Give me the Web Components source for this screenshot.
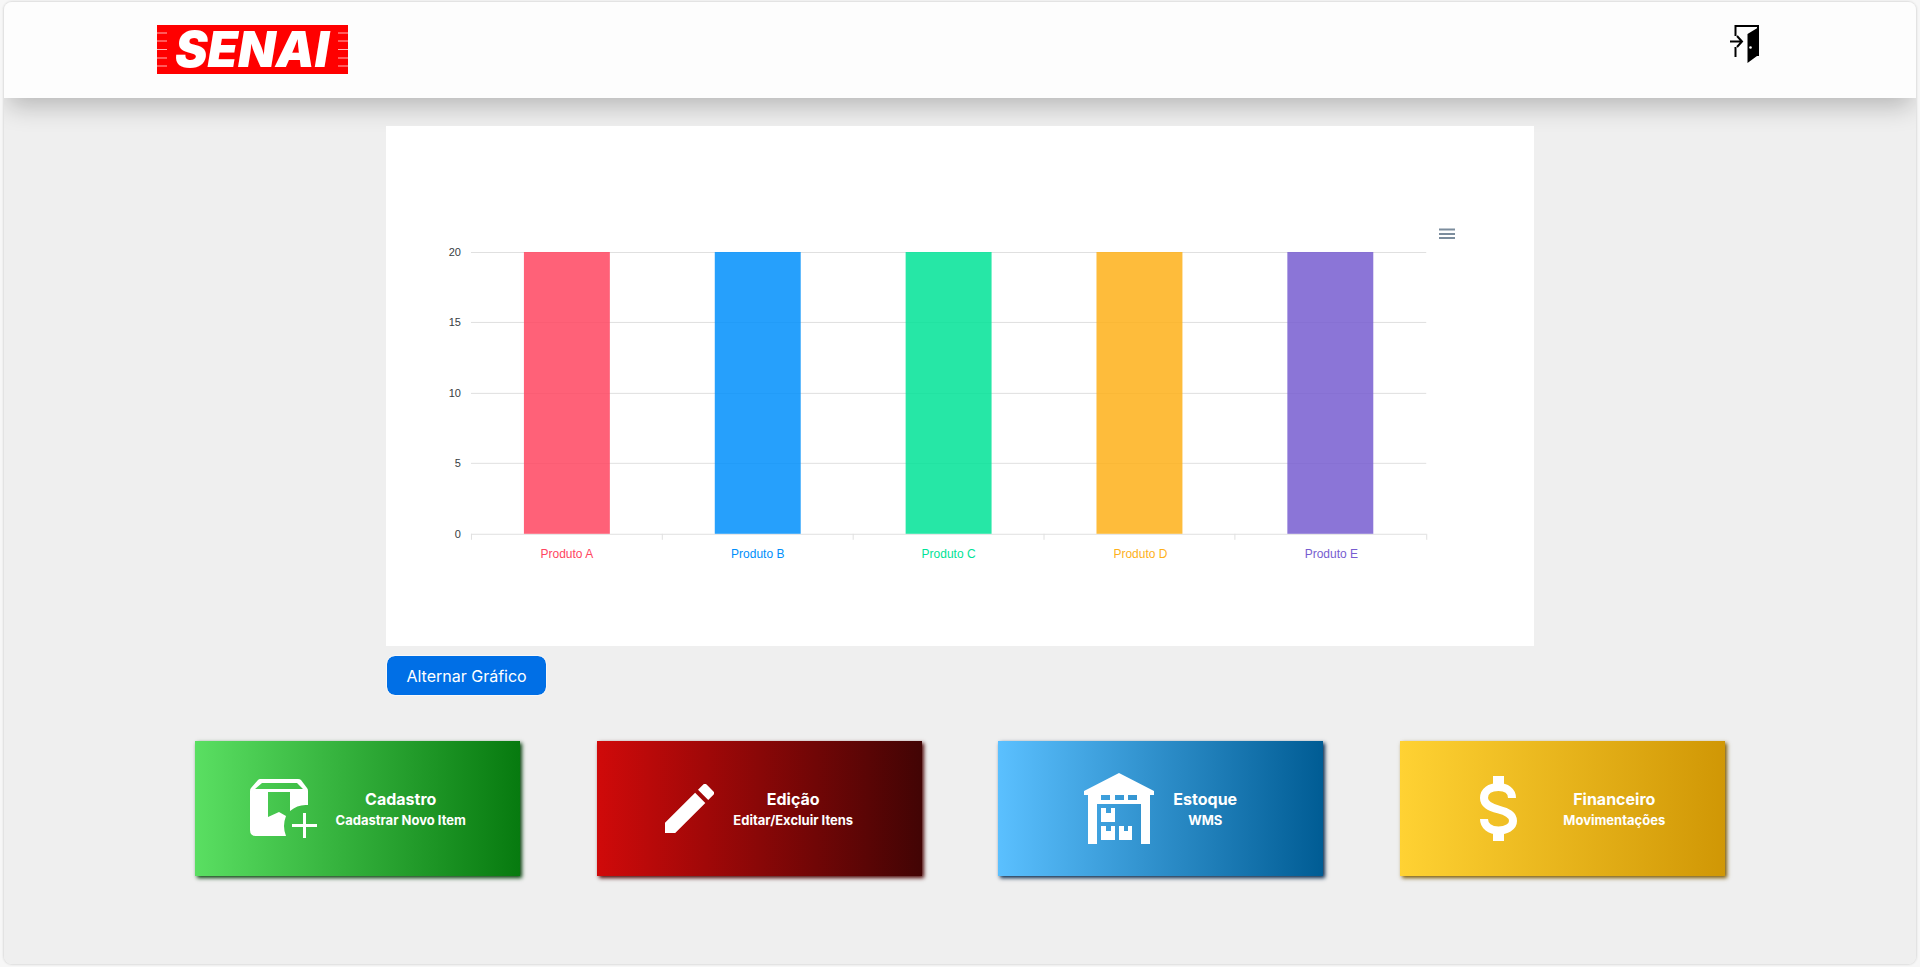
<!DOCTYPE html>
<html lang="pt-BR">
<head>
<meta charset="utf-8">
<title>SENAI</title>
<style>
  body { margin: 0; background: #f7f7f7; font-family: Inter, sans-serif; }
</style>
</head>
<body>
<app-shell>
  <app-header slot="header"></app-header>
  <stock-chart></stock-chart>
  <nav-tiles>
    <nav-tile from="#5adf62" to="#077a0f" shade="#04400a">
      <svg slot="icon" width="67" height="59" viewBox="0 0 67 59" fill="#fff"><path fill-rule="evenodd" d="M10 0H48Q50 0 51 1L57 9Q58 10 58 12V26Q48 25 40 32V13H18V38L29 33L36 37Q32 47 36 57H6Q0 57 0 51V12Q0 10 1 9L8 1Q9 0 10 0ZM12 4L5 10H53L47 4Z"/><path d="M53 34H56V45H67V48H56V59H53V48H42V45H53Z"/></svg>
      <span slot="title">Cadastro</span>Cadastrar Novo Item
    </nav-tile>
    <nav-tile from="#d00a0a" to="#420404" shade="#4a0505">
      <svg slot="icon" width="49" height="49" viewBox="3 3 18 18" fill="#fff"><path d="M3 17.25V21h3.75L17.81 9.94l-3.75-3.75L3 17.25zM20.71 7.04a1 1 0 0 0 0-1.41l-2.34-2.34a1 1 0 0 0-1.41 0l-1.83 1.83 3.75 3.75 1.83-1.83z"/></svg>
      <span slot="title">Edição</span>Editar/Excluir Itens
    </nav-tile>
    <nav-tile from="#5bc0ff" to="#005c94" shade="#03254a">
      <svg slot="icon" width="70" height="71" viewBox="0 0 70 71" fill="#fff"><path fill-rule="evenodd" d="M35 0L70 18V22H66V71H57V31H13V71H4V22H0V18ZM17 22V27H26V22ZM31 22V27H40V22ZM44 22V27H53V22Z"/><path d="M17 35H22V40H27V35H31V49H17ZM17 53H22V58H27V53H31V67H17ZM35 53H40V58H44V53H48V67H35Z"/></svg>
      <span slot="title">Estoque</span>WMS
    </nav-tile>
    <nav-tile from="#ffd233" to="#d09705" shade="#7a5800">
      <svg slot="icon" width="85" height="65" viewBox="3 0 85 65" fill="none" stroke="#fff"><path d="M42.500 0V10M42.500 56V65" stroke-width="11"/><path d="M56 22C56 15 50 11 42.500 11C34 11 28 15 28 22C28 28 33 31 42.500 33.500C52 36 57 39 57 45C57 51 50 54.500 42.500 54.500C34 54.500 28 50 28 43" stroke-width="8"/></svg>
      <span slot="title">Financeiro</span>Movimentações
    </nav-tile>
  </nav-tiles>
</app-shell>

<script>
function define(name, render) {
  customElements.define(name, class extends HTMLElement {
    constructor() {
      super();
      this.attachShadow({ mode: 'open' });
    }
    connectedCallback() {
      this.shadowRoot.innerHTML = render(this);
    }
  });
}

define('app-shell', () => `
  <style>
    :host { display: block; padding: 2px 4px; }
    .panel {
      display: flex; flex-direction: column; box-sizing: border-box;
      min-height: calc(100vh - 5px); overflow: hidden;
      border-radius: 8px; background: #efefef;
    }
    .frame { border-radius: 8px; box-shadow: 0 0 2px 1px #dcdcdc; }
    main { display: flex; flex-direction: column; align-items: center; padding: 28px 0; }
  </style>
  <div class="frame"><div class="panel">
    <slot name="header"></slot>
    <main><slot></slot></main>
  </div></div>`);

define('app-header', () => `
  <style>
    :host {
      display: flex; justify-content: space-between; align-items: flex-start;
      box-sizing: border-box; height: 96px; padding: 23px 8%;
      background: #fdfdfd; box-shadow: 0 12px 24px -4px #0000003d;
    }
    svg { display: block; overflow: visible; }
    button { border: 0; padding: 0; margin-right: 3px; background: none; cursor: pointer; }
  </style>
  <svg width="191" height="49" viewBox="0 0 191 49" role="img" aria-label="SENAI">
    <rect width="191" height="49" fill="#f00"/>
    <path d="M0 8H10M0 16H10M0 24.500H10M0 33H10M0 41H10M181 8H191M181 16H191M181 24.500H191M181 33H191M181 41H191" stroke="#ffb4b4"/>
    <text x="95" y="42" text-anchor="middle" font-family="Inter" font-size="49" font-weight="900" font-style="italic" fill="#fff">SENAI</text>
  </svg>
  <button type="button" aria-label="Sair">
    <svg width="30" height="38" viewBox="0 0 30 38" fill="none" stroke="#000">
      <path d="M5.500 11V1H28V31M5.500 22V32" stroke-width="2"/>
      <path d="M0 16.500H12M7 11L12 16.500L7 22" stroke-width="2"/>
      <path d="M17.500 9L29 2V31H27L17.500 38Z" fill="#000" stroke="none"/>
      <circle cx="20.500" cy="22.500" r="1.300" fill="#fff" stroke="none"/>
    </svg>
  </button>`);

const products = [
  ['Produto A', '#ff4560'], ['Produto B', '#008ffb'], ['Produto C', '#00e396'],
  ['Produto D', '#feb019'], ['Produto E', '#775dd0'],
];

function drawChart() {
  const left = 85, right = 1041, top = 6, bottom = 288, step = (right - left) / 5;
  let out = '';
  [20, 15, 10, 5, 0].forEach((value, i) => {
    const y = Math.floor(top + (bottom - top) * i / 4);
    out += `<path d="M${left} ${y + .5}H${right}" stroke="#e0e0e0"/>
      <text x="75" y="${y + 4}" text-anchor="end" font-size="11" fill="#373d3f">${value}</text>`;
  });
  products.forEach(([name, color], i) => {
    const center = left + step * (i + .5);
    out += `<rect x="${Math.round(center - 43)}" y="${top}" width="86" height="${bottom - top}" fill="${color}" fill-opacity=".85"/>
      <text x="${Math.ceil(center)}" y="312" text-anchor="middle" font-size="12" fill="${color}">${name}</text>`;
  });
  for (let i = 0; i <= 5; i++) out += `<path d="M${Math.floor(left + step * i) + .5} ${bottom}v6" stroke="#e0e0e0"/>`;
  return out;
}

define('stock-chart', () => `
  <style>
    :host { display: flex; flex-direction: column; align-items: flex-start; gap: 9px; width: 60%; }
    .card { width: 100%; box-sizing: border-box; padding-top: 96px; background: #fff; }
    .tools { display: flex; justify-content: flex-end; padding-right: 75px; }
    .menu { width: 24px; height: 24px; padding: 0; border: 0; background: none; cursor: pointer; }
    svg { display: block; }
    .chart { width: 100%; height: auto; font-family: "Liberation Sans", Arial, sans-serif; }
    .toggle {
      height: 41px; padding: 1px 19px 0; border: 1px solid #f8f8f8; border-radius: 9px;
      background: #006fe6; background-clip: padding-box; color: #fff;
      font: 400 16px/24px Inter, sans-serif; cursor: pointer;
    }
  </style>
  <section class="card">
    <div class="tools">
      <button class="menu" type="button" aria-label="Menu">
        <svg width="24" height="24"><path d="M4 7.500H20M4 12H20M4 16H20" stroke="#7c8d9d" stroke-width="2"/></svg>
      </button>
    </div>
    <svg class="chart" viewBox="0 0 1148 400">${drawChart()}</svg>
  </section>
  <button class="toggle" type="button">Alternar Gráfico</button>`);

define('nav-tiles', () => `
  <style>
    :host { display: flex; justify-content: space-between; width: 80%; margin-top: 45px; }
  </style>
  <slot></slot>`);

define('nav-tile', el => `
  <style>
    :host { display: block; width: 21.25%; }
    a {
      display: flex; align-items: center; justify-content: center; gap: 19px;
      height: 135px; color: #fff; text-decoration: none; text-align: center;
      background: linear-gradient(90deg, ${el.getAttribute('from')}, ${el.getAttribute('to')});
      box-shadow: 2px 2px 4px ${el.getAttribute('shade')};
    }
    .label { padding-top: 4px; }
    .title { display: block; font: 700 16px/20px Inter, sans-serif; }
    .text { display: block; font: 700 13px/22px Inter, sans-serif; white-space: nowrap; }
  </style>
  <a href="#">
    <slot name="icon"></slot>
    <span class="label"><span class="title"><slot name="title"></slot></span><span class="text"><slot></slot></span></span>
  </a>`);
</script>
</body>
</html>
